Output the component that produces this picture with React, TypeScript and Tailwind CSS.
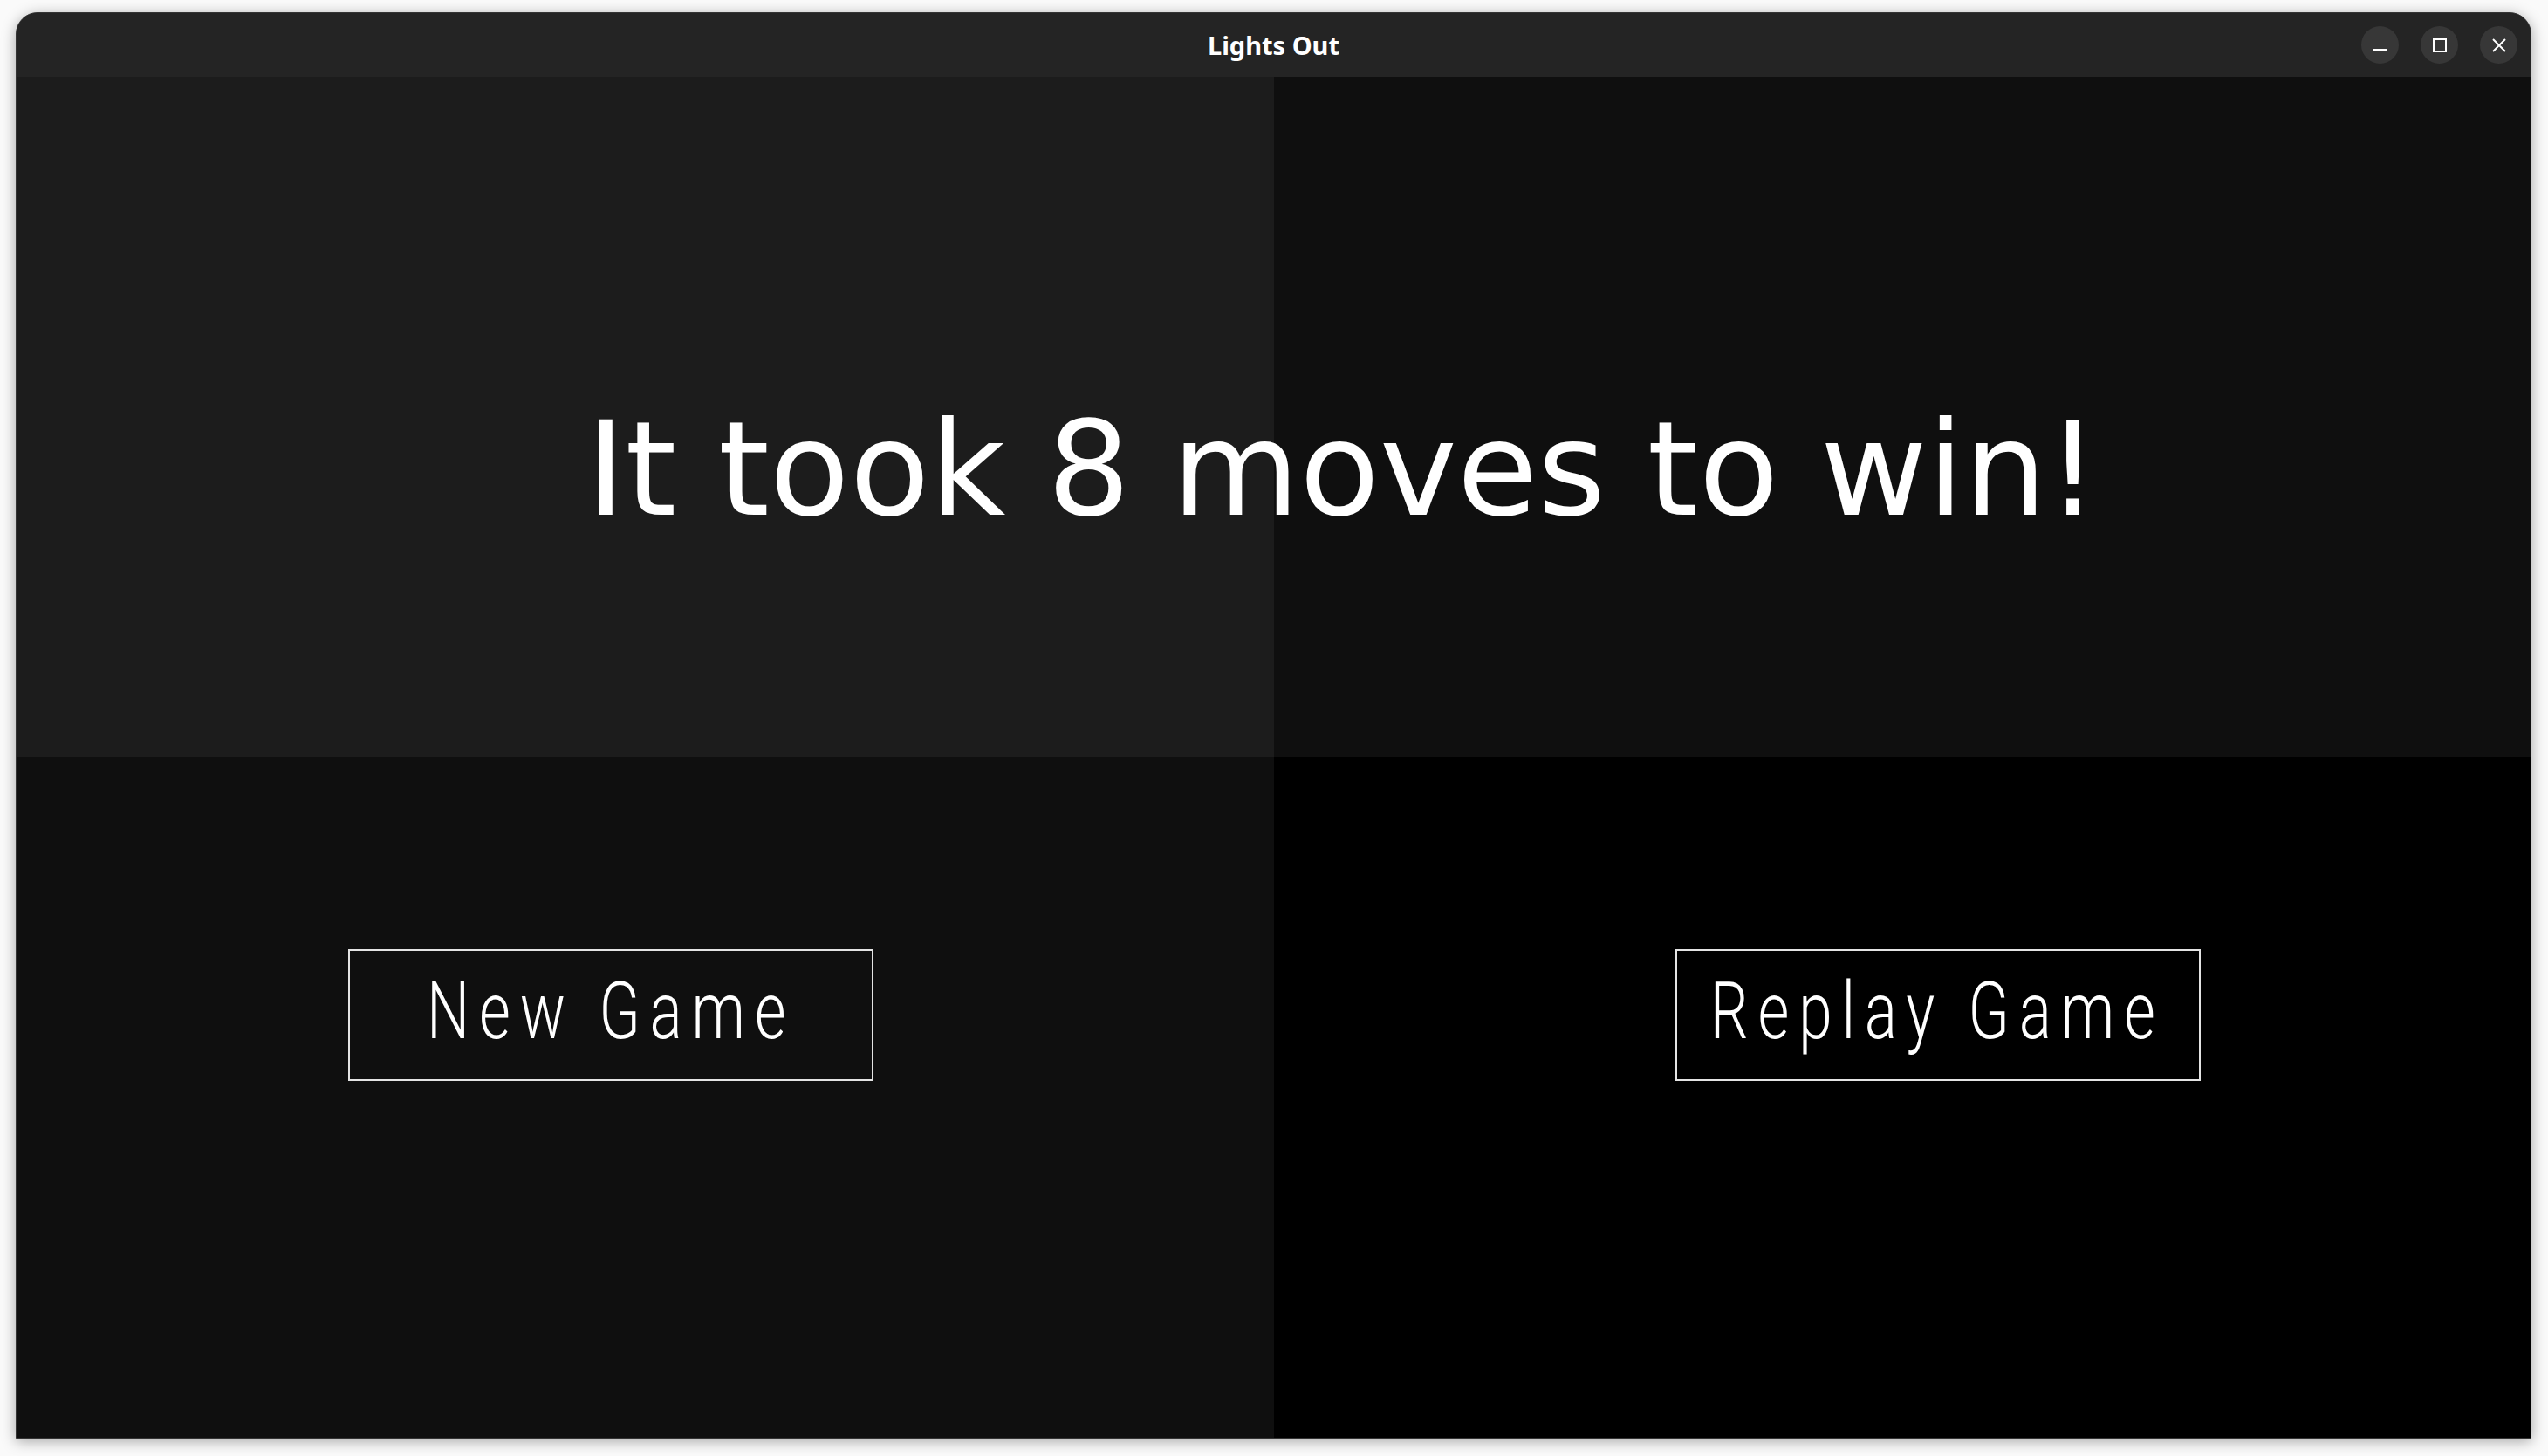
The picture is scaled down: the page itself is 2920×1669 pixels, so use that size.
import React from "react";

function TitleButton({ children }: { children: React.ReactNode }) {
  return (
    <div className="w-[43px] h-[43px] rounded-full bg-[#373737] flex items-center justify-center">
      {children}
    </div>
  );
}

function GameButton({ label }: { label: string }) {
  return (
    <div className="w-[602px] h-[151px] border-2 border-[#e4e4e4] flex items-center justify-center pb-[8px] overflow-hidden">
      <span className="inline-block whitespace-nowrap text-[90px] leading-none font-light tracking-[14px] text-white scale-x-[0.77] font-['Roboto',sans-serif]">
        {label}
      </span>
    </div>
  );
}

export default function App() {
  return (
    <div className="w-[2920px] h-[1669px] bg-[#fafafa] pt-[14px] pl-[18px] pr-[19px] pb-[20px]">
      <div className="w-full h-full flex flex-col rounded-t-[25px] border border-[#343434] overflow-hidden shadow-[0_3px_16px_rgba(0,0,0,0.35)] bg-[#242424]">
        {/* Title bar */}
        <div className="h-[73px] shrink-0 bg-[#242424] relative flex items-center justify-center">
          <span className="text-[29px] font-bold text-white font-['Noto_Sans',sans-serif] leading-none">
            Lights Out
          </span>
          <div className="absolute right-[15px] top-0 h-full flex items-center gap-[25px]">
            <TitleButton>
              <svg width="16" height="16" viewBox="0 0 16 16">
                <rect x="0" y="12" width="16" height="2" fill="#ffffff" />
              </svg>
            </TitleButton>
            <TitleButton>
              <svg width="16" height="16" viewBox="0 0 16 16">
                <rect x="1" y="1" width="14" height="14" fill="none" stroke="#ffffff" strokeWidth="2" />
              </svg>
            </TitleButton>
            <TitleButton>
              <svg width="16" height="16" viewBox="0 0 16 16">
                <path d="M1 1 L15 15 M15 1 L1 15" stroke="#ffffff" strokeWidth="2" />
              </svg>
            </TitleButton>
          </div>
        </div>

        {/* Game board */}
        <div className="flex-1 grid grid-cols-2 grid-rows-2 relative">
          <div className="bg-[#1c1c1c]" />
          <div className="bg-[#0f0f0f]" />
          <div className="bg-[#0f0f0f] pl-[380px] pt-[220px]">
            <GameButton label="New Game" />
          </div>
          <div className="bg-[#000000] pl-[460px] pt-[220px]">
            <GameButton label="Replay Game" />
          </div>

          <div className="absolute left-0 right-0 top-0 h-1/2 flex justify-center items-start pt-[375px] pl-[159px] pointer-events-none">
            <span className="text-[150px] leading-none text-white whitespace-nowrap font-['DejaVu_Sans',sans-serif]">
              It took 8 moves to win!
            </span>
          </div>
        </div>
      </div>
    </div>
  );
}
